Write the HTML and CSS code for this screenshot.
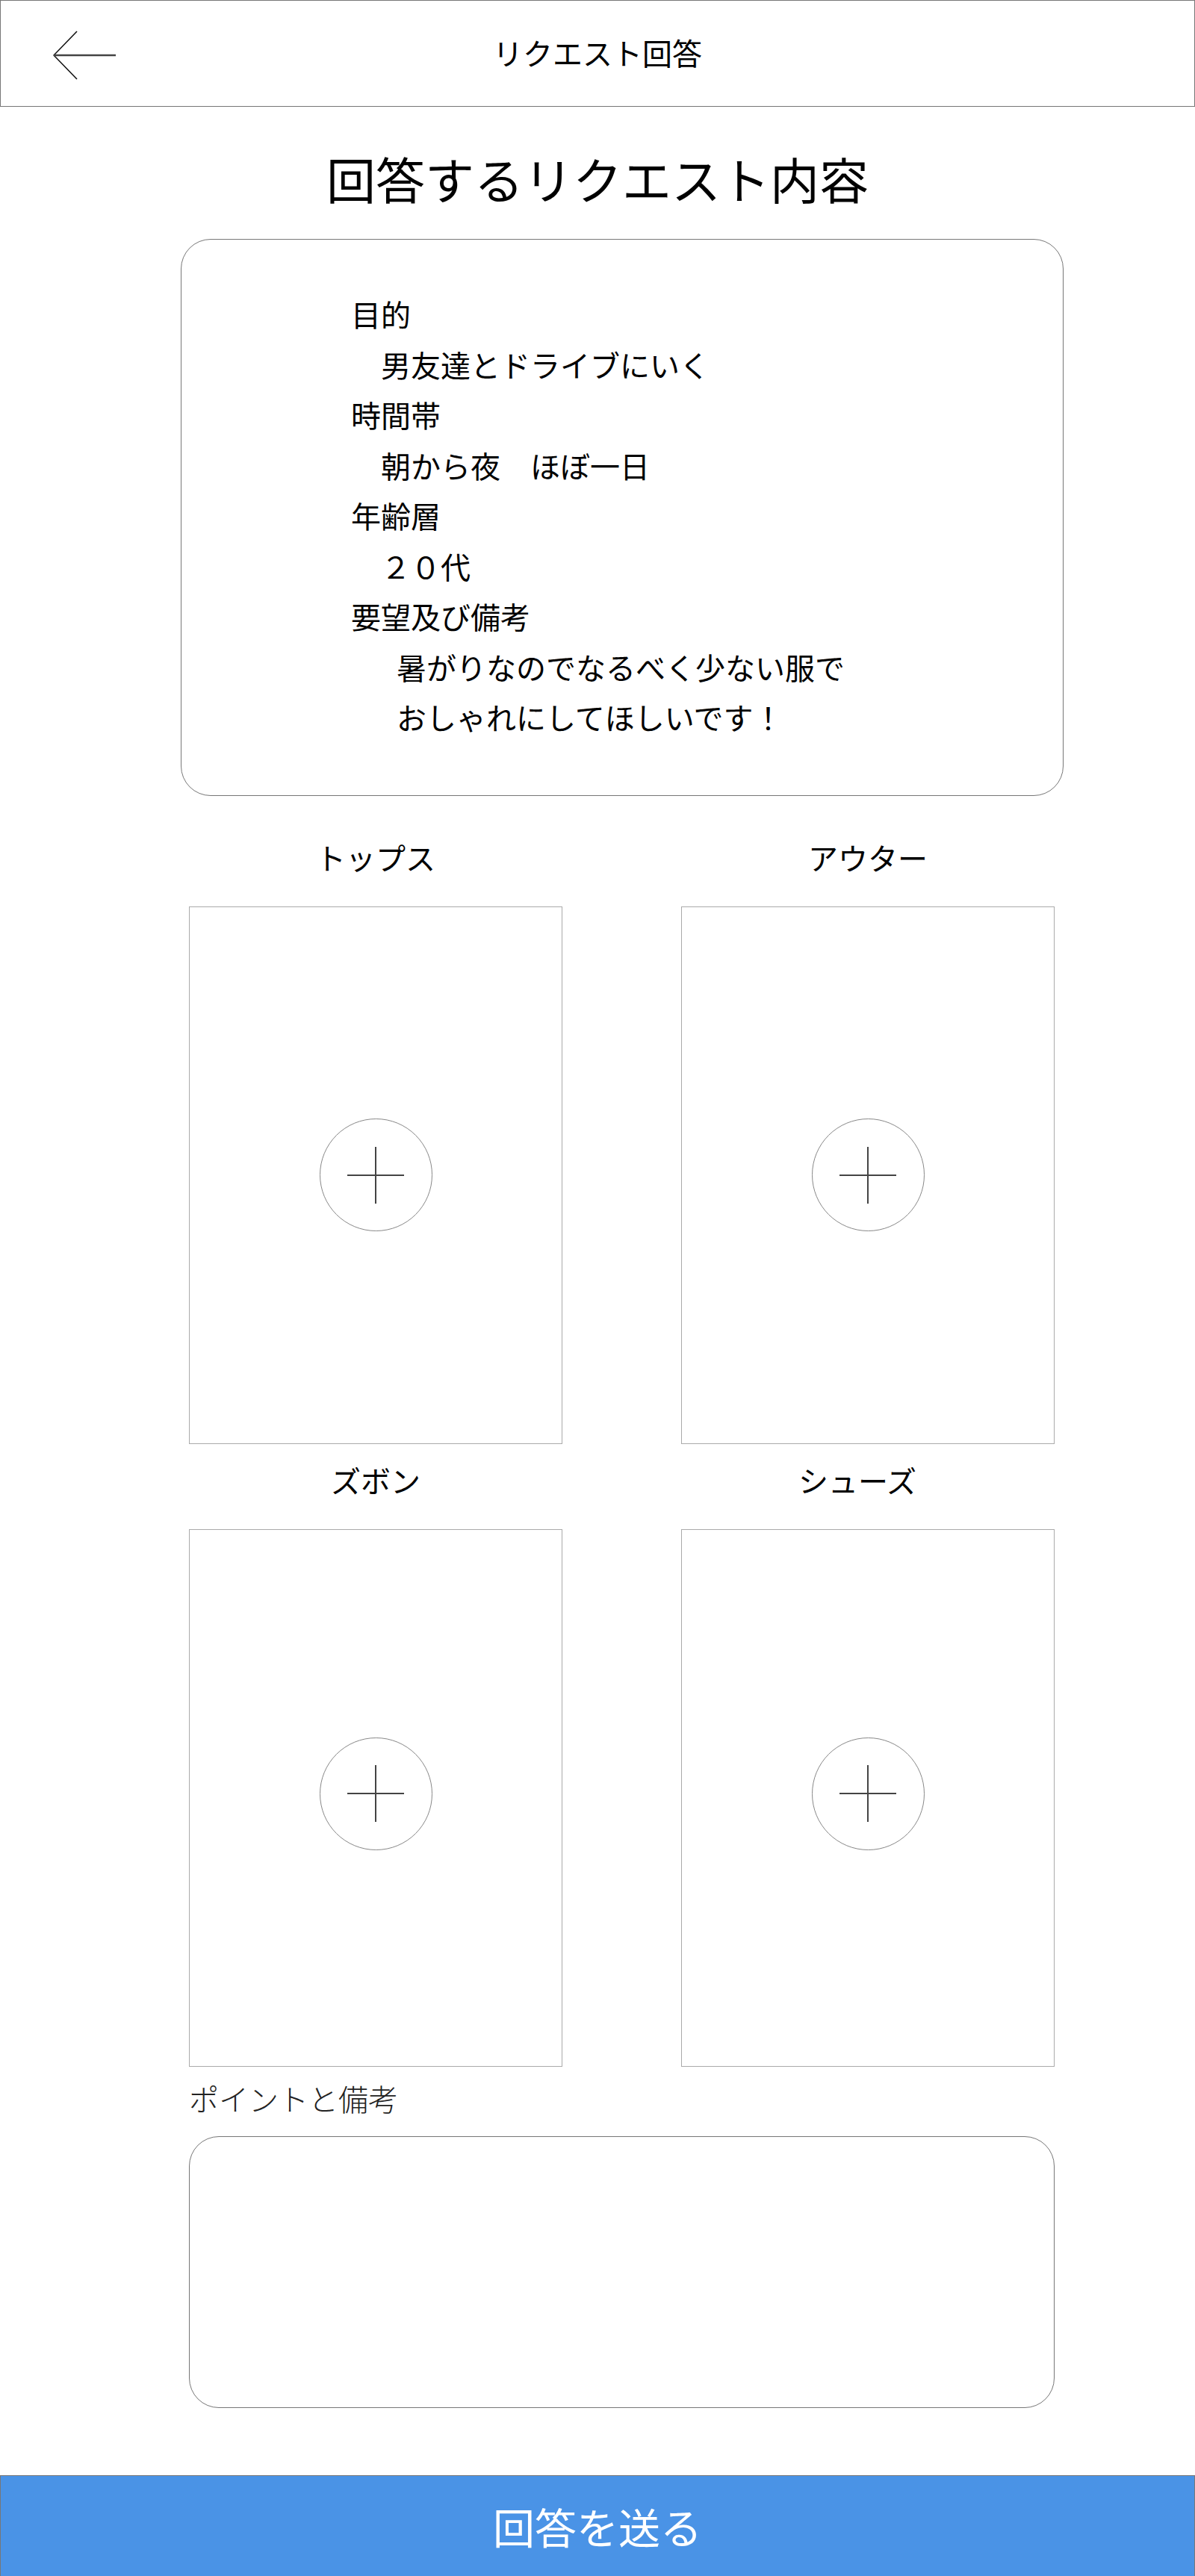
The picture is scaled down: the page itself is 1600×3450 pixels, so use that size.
FILE: index.html
```html
<!DOCTYPE html>
<html lang="ja">
<head>
    <meta charset="UTF-8">
    <meta name="viewport" content="width=device-width, initial-scale=1.0">
    <title>リクエスト回答</title>
    <link rel="stylesheet" href="styles.css">
</head>
<body>

<header class="app-header">
    <a class="back-link" href="#">
        <svg width="84" height="66" viewBox="0 0 84 66">
            <path d="M32 1 L1 33 L32 65" fill="none" stroke="#111" stroke-width="1.6"/>
            <path d="M1 33 H84" stroke="#444" stroke-width="2.4"/>
        </svg>
    </a>
    <h1 class="app-title">リクエスト回答</h1>
    <span></span>
</header>

<h2 class="request-heading">回答するリクエスト内容</h2>

<main class="main">
    <dl class="request-card">
        <dt>目的</dt>
        <dd>男友達とドライブにいく</dd>
        <dt>時間帯</dt>
        <dd>朝から夜　ほぼ一日</dd>
        <dt>年齢層</dt>
        <dd>２０代</dd>
        <dt>要望及び備考</dt>
        <dd class="remarks">暑がりなのでなるべく少ない服で<br>おしゃれにしてほしいです！</dd>
    </dl>

    <div class="item-grid">
        <div class="item-slot">
            <div class="item-label">トップス</div>
            <div class="item-box">
                <button class="add-button">
                    <svg width="76" height="76" viewBox="0 0 76 76"><path d="M0 38 H76 M38 0 V76" stroke="#444" stroke-width="2"/></svg>
                </button>
            </div>
        </div>
        <div class="item-slot">
            <div class="item-label">アウター</div>
            <div class="item-box">
                <button class="add-button">
                    <svg width="76" height="76" viewBox="0 0 76 76"><path d="M0 38 H76 M38 0 V76" stroke="#444" stroke-width="2"/></svg>
                </button>
            </div>
        </div>
        <div class="item-slot">
            <div class="item-label">ズボン</div>
            <div class="item-box item-box-low">
                <button class="add-button">
                    <svg width="76" height="76" viewBox="0 0 76 76"><path d="M0 38 H76 M38 0 V76" stroke="#444" stroke-width="2"/></svg>
                </button>
            </div>
        </div>
        <div class="item-slot">
            <div class="item-label item-label-shift">シューズ</div>
            <div class="item-box item-box-low">
                <button class="add-button">
                    <svg width="76" height="76" viewBox="0 0 76 76"><path d="M0 38 H76 M38 0 V76" stroke="#444" stroke-width="2"/></svg>
                </button>
            </div>
        </div>
    </div>

    <div class="note-label">ポイントと備考</div>
    <textarea class="note-input"></textarea>
</main>

<button class="submit-button">回答を送る</button>

</body>
</html>
```

FILE: styles.css
```css
* {
    box-sizing: border-box;
}

html, body {
    margin: 0;
    padding: 0;
    background-color: #fff;
    color: #000;
    font-family: "Noto Sans CJK JP", sans-serif;
}

.app-header {
    display: grid;
    grid-template-columns: 1fr auto 1fr;
    align-items: center;
    height: 143px;
    padding: 0 70px 4px;
    border: 1px solid #777;
}

.back-link {
    display: block;
    justify-self: start;
    height: 66px;
    margin-top: 8px;
}

.app-title {
    margin: 0;
    font-size: 40px;
    font-weight: 400;
    line-height: 60px;
}

.request-heading {
    margin: 55px 0 42px;
    text-align: center;
    font-size: 66px;
    font-weight: 400;
    line-height: 80px;
}

.main {
    width: 1182px;
    margin-left: 242px;
}

.request-card {
    margin: 0;
    padding: 66px 0 70px 227px;
    border: 1px solid #777;
    border-radius: 40px;
    font-size: 40px;
    line-height: 67.5px;
}

.request-card dt {
    margin: 0;
}

.request-card dd {
    margin: 0;
    padding-left: 40px;
}

.request-card dd.remarks {
    padding-left: 61px;
}

.item-grid {
    display: grid;
    grid-template-columns: 500px 500px;
    justify-content: space-between;
    row-gap: 18px;
    margin-top: 52px;
    padding: 0 12px 0 11px;
}

.item-label {
    margin-bottom: 36px;
    text-align: center;
    font-size: 40px;
    line-height: 60px;
}

.item-label-shift {
    padding-right: 28px;
}

.item-box {
    display: flex;
    align-items: center;
    justify-content: center;
    height: 720px;
    border: 1px solid #aaa;
}

.item-box-low {
    padding-bottom: 11px;
}

.add-button {
    display: flex;
    align-items: center;
    justify-content: center;
    width: 151px;
    height: 151px;
    padding: 0;
    border: 1px solid #888;
    border-radius: 50%;
    background: #fff;
    cursor: pointer;
}

.note-label {
    margin: 12px 0 21px 11px;
    color: #222;
    font-size: 40px;
    font-weight: 300;
    line-height: 60px;
}

.note-input {
    display: block;
    width: 1159px;
    height: 364px;
    margin-left: 11px;
    padding: 24px 32px;
    border: 1px solid #777;
    border-radius: 40px;
    font: inherit;
    font-size: 36px;
    resize: none;
    outline: none;
}

.submit-button {
    display: block;
    width: 100%;
    height: 137px;
    margin-top: 90px;
    padding: 0;
    border: 1px solid #777;
    background-color: #4a93e6;
    color: #fff;
    font-family: "Noto Sans CJK JP", sans-serif;
    font-size: 56px;
    line-height: 1;
    cursor: pointer;
}
```
